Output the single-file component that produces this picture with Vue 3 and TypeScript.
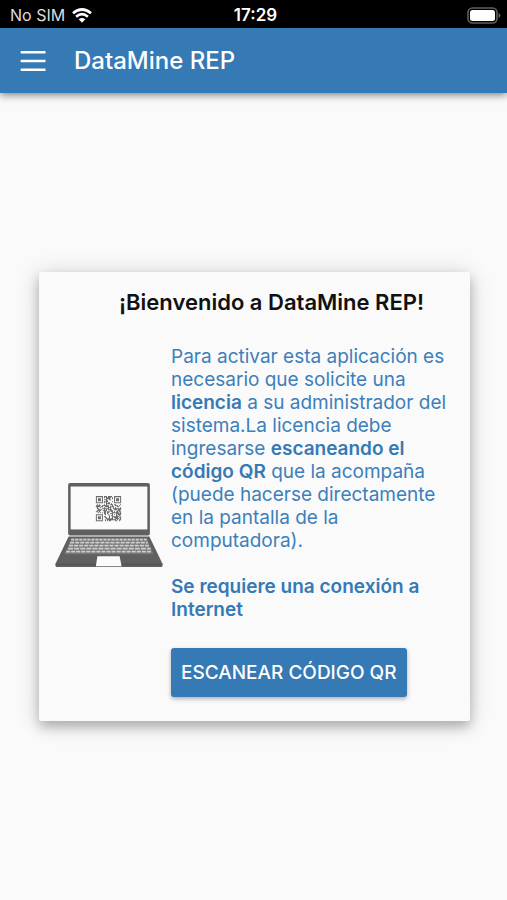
<script setup lang="ts">
const size = 25

function finder(x: number, y: number): boolean | null {
  const corners = [[0, 0], [size - 7, 0], [0, size - 7]]
  for (const [cx, cy] of corners) {
    const dx = x - cx
    const dy = y - cy
    if (dx >= -1 && dx <= 7 && dy >= -1 && dy <= 7) {
      const ring = Math.max(Math.abs(dx - 3), Math.abs(dy - 3))
      return ring === 3 || ring <= 1
    }
  }
  const inner = Math.max(Math.abs(x - 18), Math.abs(y - 18))
  if (inner <= 2) return inner !== 1
  return null
}

function buildModules(): string {
  let seed = 29
  let path = ''
  for (let y = 0; y < size; y++) {
    for (let x = 0; x < size; x++) {
      seed = (seed * 1103515245 + 12345) % 2147483648
      const dark = finder(x, y) ?? seed / 2147483648 > 0.48
      if (dark) path += `M${x} ${y}h1v1h-1z`
    }
  }
  return path
}

const qrPath = buildModules()

interface KeyRow { y: number; left: number; right: number; dash: string }
const keyRows: KeyRow[] = [
  { y: 56, left: 16, right: 91, dash: '3 1' },
  { y: 59, left: 15, right: 92, dash: '4 1' },
  { y: 62, left: 14, right: 93, dash: '4 1' },
  { y: 65, left: 13, right: 95, dash: '5 1' },
  { y: 68, left: 11, right: 96, dash: '4 1' },
]
</script>

<template>
  <div class="screen">
    <div class="status">
      <div class="carrier">
        <span>No SIM</span>
        <svg width="20" height="15" viewBox="0 0 20 15" aria-hidden="true">
          <g fill="none" stroke="#fff" stroke-width="2.7">
            <path d="M1 5.3Q10-2.3 19 5.3" />
            <path d="M4.1 8.8Q10 3.6 15.9 8.8" />
          </g>
          <path d="M6.7 11.3Q10 8.6 13.3 11.3L10 14.7Z" fill="#fff" />
        </svg>
      </div>
      <time class="clock">17:29</time>
      <svg class="battery" width="34" height="17" viewBox="0 0 34 17" aria-hidden="true">
        <rect x="1" y="1" width="29" height="15" rx="4.5" fill="#000" stroke="#606060" stroke-width="1.6" />
        <rect x="3" y="3" width="25" height="11" rx="2.5" fill="#fff" />
        <path d="M31.5 6q2 .6 2 2.5T31.5 11z" fill="#606060" />
      </svg>
    </div>

    <header class="toolbar">
      <button class="menu" type="button" aria-label="Menú">
        <svg width="26" height="20" viewBox="0 0 26 20" aria-hidden="true">
          <path d="M.7 1.3h24.8M.7 10h24.8M.7 18.7h24.8" stroke="#fff" stroke-width="2.4" />
        </svg>
      </button>
      <h1>DataMine REP</h1>
    </header>

    <main class="content">
      <section class="card">
        <h2>¡Bienvenido a DataMine REP!</h2>
        <div class="body">
          <svg class="laptop" viewBox="0 0 107 84" aria-hidden="true">
            <rect x="13" y="0" width="81" height="52" rx="2" fill="#606060" />
            <rect x="15.5" y="3.5" width="76" height="42.5" fill="#fbfbfb" />
            <path :d="qrPath" transform="translate(40.5 13)" fill="#6c6c6c" />
            <path d="M13.5 53H93.5L106.5 80V82Q106.5 83.5 104.5 83.5H2.5Q.5 83.5 .5 82V80Z" fill="#606060" />
            <path d="M16 54.5H91L97.5 70.5H9.5Z" fill="#777" />
            <g fill="none" stroke="#cfcfcf" stroke-width="1.7">
              <path
                v-for="row in keyRows"
                :key="row.y"
                :d="`M${row.left} ${row.y}H${row.right}`"
                :stroke-dasharray="row.dash"
              />
            </g>
            <path d="M42 72.5H64L66 82.5H40.5Z" fill="#fbfbfb" />
            <path d="M.5 80.5H40.5M66 80.5H106.5" stroke="#505050" stroke-width="1" />
          </svg>
          <div class="message">
            <p>
              Para activar esta aplicación es necesario que solicite una
              <strong>licencia</strong> a su administrador del sistema.La licencia debe ingresarse
              <strong>escaneando el código QR</strong> que la acompaña (puede hacerse
              directamente en la pantalla de la computadora).
            </p>
            <p><strong>Se requiere una conexión a Internet</strong></p>
            <button class="scan" type="button">ESCANEAR CÓDIGO QR</button>
          </div>
        </div>
      </section>
    </main>
  </div>
</template>

<style>
body {
  margin: 0;
  background: #fafafa;
}
</style>

<style scoped>
.screen {
  display: flex;
  flex-direction: column;
  min-height: 100vh;
  background: #fafafa;
  font-family: Inter, "Liberation Sans", sans-serif;
}

.status {
  box-sizing: border-box;
  display: grid;
  grid-template-columns: 1fr auto 1fr;
  align-items: center;
  height: 28px;
  padding: 2px 6px 0 10px;
  background: #000;
  color: #fff;
  font-size: 16px;
}

.carrier {
  display: flex;
  align-items: center;
  gap: 7px;
  color: #ddd;
}

.clock {
  font-size: 17px;
  font-weight: 600;
}

.battery {
  justify-self: end;
}

.toolbar {
  display: flex;
  align-items: center;
  gap: 20px;
  height: 65px;
  padding: 0 12px;
  background: #3579b5;
  box-shadow: 0 2px 8px rgba(0, 0, 0, 0.5);
  color: #fff;
}

.menu {
  display: flex;
  align-items: center;
  justify-content: center;
  width: 42px;
  height: 48px;
  padding: 0;
  border: 0;
  background: none;
}

h1 {
  margin: 0;
  font-size: 24px;
  font-weight: 500;
}

.content {
  display: flex;
  flex: 1;
  align-items: center;
  padding: 0 37px 0 39px;
}

.card {
  box-sizing: border-box;
  width: 100%;
  padding: 16px;
  border-radius: 2px;
  background: #fafafa;
  box-shadow: 0 6px 12px rgba(0, 0, 0, 0.24), 0 2px 24px rgba(0, 0, 0, 0.16);
}

h2 {
  margin: 0;
  padding-left: 34px;
  color: #111;
  font-size: 22px;
  font-weight: 600;
  line-height: 28px;
  text-align: center;
}

.body {
  display: flex;
  align-items: center;
  gap: 8px;
  margin-top: 29px;
}

.laptop {
  flex: none;
  width: 108px;
}

.message {
  flex: 1;
  min-width: 0;
  padding-bottom: 8px;
  color: #3c80bb;
  font-size: 19px;
  line-height: 23px;
}

.message p {
  margin: 0 0 23px;
}

.message strong {
  color: #3579b5;
  font-weight: 600;
}

.scan {
  height: 49px;
  margin-top: 4px;
  padding: 0 10px;
  border: 0;
  border-radius: 3px;
  background: #3579b5;
  box-shadow: 0 2px 4px rgba(0, 0, 0, 0.3);
  color: #fff;
  font-family: inherit;
  font-size: 19px;
  font-weight: 500;
  white-space: nowrap;
}
</style>
